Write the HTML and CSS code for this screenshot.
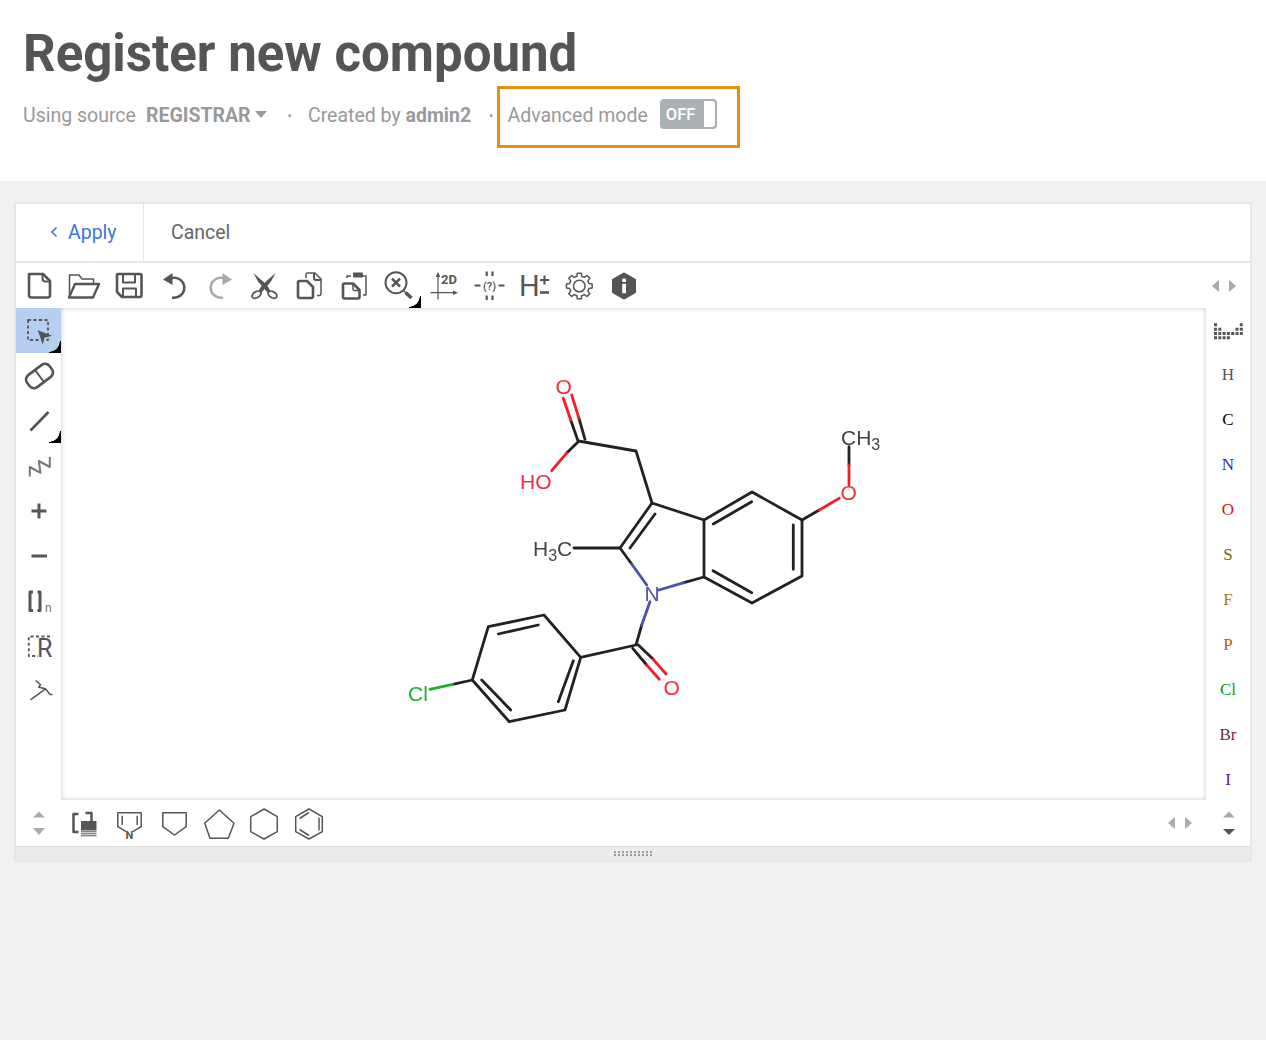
FILE: index.html
```html
<!DOCTYPE html>
<html lang="en">
<head>
<meta charset="utf-8">
<title>Register new compound</title>
<link rel="stylesheet" href="styles.css">
</head>
<body>
<header class="page-head">
  <h1 class="title">Register new compound</h1>
  <div class="meta">
    <span class="meta-source">Using source</span>
    <strong class="meta-registrar">REGISTRAR</strong>
    <span class="caret"></span>
    <span class="dot dot-a">•</span>
    <span>Created by <strong>admin2</strong></span>
    <span class="dot dot-b">•</span>
    <div class="adv-box">
      <span class="adv-label">Advanced mode</span>
      <span class="toggle"><span class="toggle-label">OFF</span><span class="toggle-knob"></span></span>
    </div>
  </div>
</header>
<main class="content">
  <section class="editor">
    <div class="actions">
      <button class="action action-apply"><svg class="chev" width="8" height="12" viewBox="0 0 8 12"><path d="M6.5 1.5 2 6l4.5 4.5"/></svg>Apply</button>
      <button class="action action-cancel">Cancel</button>
    </div>

    <div class="toolbar-top">
      <div class="tools-row">
        <span class="cell"><svg class="ic" viewBox="0 0 32 32"><path class="s26" d="M6 4H20L27 11V25a2.500 2.500 0 0 1-2.500 2.500H8.500A2.500 2.500 0 0 1 6 25Z"/><path class="s2" d="M19.500 4v4.500a3 3 0 0 0 3 3H27"/></svg></span>
        <span class="cell"><svg class="ic" viewBox="0 0 32 32"><path class="s15" d="M1.500 25V5h9.500l3 4h11.500v5"/><path class="s24" d="M1 27.500 7 14h24l-6 13.500Z"/></svg></span>
        <span class="cell"><svg class="ic" viewBox="0 0 32 32"><path class="s26" d="M5 4h22a1.500 1.500 0 0 1 1.500 1.500v20a1.500 1.500 0 0 1-1.500 1.500H9l-5-5V5a1 1 0 0 1 1-1Z"/><path class="s2" d="M10 4v8.500h12V4M10 27v-8.500h13V27"/></svg></span>
        <span class="cell"><svg class="ic" viewBox="0 0 32 32"><path class="s26" d="M12.500 8.500A10 10 0 1 1 14 27.500"/><path class="f" d="M5 9.500 14.500 3V15Z"/></svg></span>
        <span class="cell"><svg class="ic ic-off" viewBox="0 0 32 32"><path class="s26" d="M21.500 8.500A10 10 0 1 0 20 27.500"/><path class="f" d="M29 9.500 19.500 3V15Z"/></svg></span>
        <span class="cell"><svg class="ic" viewBox="0 0 32 32"><polygon class="f" points="5.500,3 19,15 22.500,21 19.500,22.500 10,11.500"/><polygon class="f" points="27.500,3 14,15 10.500,21 13.500,22.500 23,11.500"/><ellipse class="s18" cx="8.500" cy="24.700" rx="4.800" ry="3" transform="rotate(-30 8.500 24.700)"/><ellipse class="s18" cx="24.500" cy="24.700" rx="4.800" ry="3" transform="rotate(30 24.500 24.700)"/></svg></span>
        <span class="cell"><svg class="ic" viewBox="0 0 32 32"><path class="s15" d="M13 8V4.500a1.500 1.500 0 0 1 1.500-1.500H22l6 6v15a1.500 1.500 0 0 1-1.500 1.500H24"/><path class="s2" d="M21 3v5a2 2 0 0 0 2 2h5"/><path class="s26" d="M5 12.500a1.500 1.500 0 0 1 1.500-1.500H14l6 6v9.500a1.500 1.500 0 0 1-1.500 1.500h-12A1.500 1.500 0 0 1 5 26.500Z"/></svg></span>
        <span class="cell"><svg class="ic" viewBox="0 0 32 32"><path class="s15" d="M9 8V6h4M24 6h4v19h-3"/><rect class="f" x="15" y="2.500" width="10" height="5" rx="1"/><path class="s26" d="M5 15a1.500 1.500 0 0 1 1.500-1.500H15l6.500 6.500v7a1.500 1.500 0 0 1-1.500 1.500H6.500A1.500 1.500 0 0 1 5 27Z"/><path class="s15" d="M15 13.500V19a1.500 1.500 0 0 0 1.500 1.500h5"/></svg></span>
        <span class="cell"><svg class="ic" viewBox="0 0 32 32"><circle class="s2" cx="13" cy="12.700" r="10.500"/><path class="s26" d="M9 8.700l8 8M17 8.700l-8 8"/><path class="s15" d="M20.500 20.500l2 2"/><path class="s36" d="M22.500 22.500 28.500 28"/></svg><span class="corner"></span></span>
        <span class="cell"><svg class="ic" viewBox="0 0 32 32"><path class="s12" d="M10 5V29.500M2.500 22.700H27"/><path class="f" d="M10 2 12.300 7H7.700ZM30 22.700 25 20.500V25Z"/><text class="t2d" x="13" y="14">2D</text></svg></span>
        <span class="cell"><svg class="ic" viewBox="0 0 32 32"><path class="s22" d="M13.700 1.500v4.500M19.500 1.500v4.500M13.700 25.500v4.500M19.500 25.500v4.500M1.500 15.500h6M25.500 15.500h6"/><text class="tq" x="16.500" y="19.500">(?)</text></svg></span>
        <span class="cell"><svg class="ic" viewBox="0 0 32 32"><text class="th" x="1" y="26">H</text><path class="s22" d="M22 10h9M26.500 5.500v9"/><path class="s26" d="M22 22.500h9"/></svg></span>
        <span class="cell"><svg class="ic" viewBox="0 0 32 32"><g transform="translate(16.300 16)"><polygon class="s15" points="9.700,-2.420 12.840,-2.030 12.840,2.030 9.700,2.420 8.570,5.150 10.520,7.640 7.640,10.520 5.150,8.570 2.420,9.700 2.030,12.840 -2.030,12.840 -2.420,9.700 -5.150,8.570 -7.640,10.520 -10.520,7.640 -8.570,5.150 -9.700,2.420 -12.840,2.030 -12.840,-2.030 -9.700,-2.420 -8.570,-5.150 -10.520,-7.640 -7.640,-10.520 -5.150,-8.570 -2.420,-9.700 -2.030,-12.840 2.030,-12.840 2.420,-9.700 5.150,-8.570 7.640,-10.520 10.520,-7.640 8.570,-5.150"/><circle class="s15" r="5.800"/></g></svg></span>
        <span class="cell"><svg class="ic" viewBox="0 0 32 32"><polygon class="fs" points="16,4 26.500,10 26.500,22 16,28 5.500,22 5.500,10"/><rect class="w" x="14.200" y="8.500" width="3.800" height="3.600" rx="1"/><rect class="w" x="14.200" y="13.800" width="3.800" height="9.500" rx=".6"/></svg></span>
      </div>
      <div class="nav-lr">
        <svg width="7" height="12" viewBox="0 0 7 12"><path class="tri" d="M7 0V12L0 6Z"/></svg>
        <svg width="7" height="12" viewBox="0 0 7 12"><path class="tri" d="M0 0V12L7 6Z"/></svg>
      </div>
    </div>

    <div class="workspace">
      <div class="toolbar-left">
        <span class="cell cell-active"><svg class="ic" viewBox="0 0 32 32"><path class="s-dash" d="M5 5H25V25H5Z"/><path class="f s-none" d="M14.700 15.300 29.200 20.800 21.500 22.800 19.800 29.700Z"/></svg><span class="corner"></span></span>
        <span class="cell"><svg class="ic" viewBox="0 0 32 32"><g transform="translate(16.500 16) rotate(-37)"><rect class="s26" x="-14" y="-7.500" width="28" height="15" rx="5.500"/><path class="s2" d="M0-7.500V7.500"/></g></svg></span>
        <span class="cell"><svg class="ic" viewBox="0 0 32 32"><path class="s26" d="M7.500 25.500 25.500 7"/></svg><span class="corner"></span></span>
        <span class="cell"><svg class="ic ic-soft" viewBox="0 0 32 32"><path class="s2" d="M6.800 26.500V17L17.500 22.800 15.800 11 26.800 17V7"/></svg></span>
        <span class="cell"><svg class="ic" viewBox="0 0 32 32"><path class="s3" d="M8.500 16H23.500M16 8.500V23.500"/></svg></span>
        <span class="cell"><svg class="ic" viewBox="0 0 32 32"><path class="s3" d="M8.500 16H24"/></svg></span>
        <span class="cell"><svg class="ic" viewBox="0 0 32 32"><path class="s3" d="M10 7H7V25.500H10M14.500 7H17V25.500H14.500"/><text class="tn" x="22" y="26.500">n</text></svg></span>
        <span class="cell"><svg class="ic" viewBox="0 0 32 32"><path class="s-dash" d="M27 6.500H5.800V26H15"/><text class="tr" x="14" y="27">R</text></svg></span>
        <span class="cell"><svg class="ic" viewBox="0 0 32 32"><path class="s15" d="M7.500 24.800 22.500 13.800 27 19.500h2.500M12.500 5.500 17.500 9.500 15.800 12.200 22.500 13.800"/></svg></span>
      </div>

      <div class="canvas">
        <svg class="molecule" viewBox="61 308 1145 492">
          <g class="bond">
            <path d="M570.700 420 578.300 441.700M579 418.300 585 439.300"/>
            <path d="M578.300 441 636 451 652 503"/>
            <path d="M578 442 566.700 453"/>
            <path d="M652 503 620 548M655 514 630 548M652 503 704 520"/>
            <path d="M620 548H574M620 548 631.700 564"/>
            <path d="M684 582.700 704 577"/>
            <path d="M704 520V577M704 520 752 492 802 520V576L752 603 704 577"/>
            <path d="M713.300 524 751.700 501.700M793.300 525V569.300M713 570.700 751.700 592.700"/>
            <path d="M802 520 819.300 510M849 465V446.700"/>
            <path d="M641.700 625 636 645 580.700 657.300 544 615 488.300 626.700 472.300 680 509.300 721.700 565 710 580.700 657.300"/>
            <path d="M538.300 625 498.300 634M573.300 660.700 558.300 701.700M481.700 680 510.700 710"/>
            <path d="M472.300 680 452.700 684.300"/>
            <path d="M632.700 648.300 646.700 665M638.300 645 653.300 659.300"/>
          </g>
          <g class="bond bond-red">
            <path d="M563.300 398.300 570.700 420M571.700 395 579 418.300"/>
            <path d="M566.700 453 551.700 470.700"/>
            <path d="M819.300 510 839.300 498.300M849 485V465"/>
            <path d="M646.700 665 659.300 679.300M653.300 659.300 666 674"/>
          </g>
          <g class="bond bond-blue">
            <path d="M631.700 564 646.700 585M659 590 684 582.700M650 601.700 641.700 625"/>
          </g>
          <path class="bond bond-green" d="M452.700 684.300 430 689.300"/>
          <text class="atom atom-o" x="555.500" y="394">O</text>
          <text class="atom atom-o" x="520" y="488.500">HO</text>
          <text class="atom atom-o" x="840.500" y="500">O</text>
          <text class="atom atom-o" x="663.500" y="695">O</text>
          <text class="atom atom-n" x="644.500" y="600.500">N</text>
          <text class="atom atom-g" x="841" y="444.500">CH<tspan class="sub" dy="5">3</tspan></text>
          <text class="atom atom-g" x="533" y="555.500">H<tspan class="sub" dy="5">3</tspan><tspan dy="-5">C</tspan></text>
          <text class="atom atom-cl" x="408" y="700.500">Cl</text>
        </svg>
      </div>

      <div class="toolbar-right">
        <span class="cell"><svg class="ic" viewBox="0 0 32 32"><path class="pt" d="M2 9.800h3M27.800 9.800h3M2 14.200h7.300M23.500 14.200h7.300M2 18.500H30.800M2 22.800h16"/></svg></span>
        <span class="atom-btn el-h">H</span>
        <span class="atom-btn el-c">C</span>
        <span class="atom-btn el-n">N</span>
        <span class="atom-btn el-o">O</span>
        <span class="atom-btn el-s">S</span>
        <span class="atom-btn el-f">F</span>
        <span class="atom-btn el-p">P</span>
        <span class="atom-btn el-cl">Cl</span>
        <span class="atom-btn el-br">Br</span>
        <span class="atom-btn el-i">I</span>
      </div>
    </div>

    <div class="toolbar-bottom">
      <div class="tools-row">
        <span class="cell"><svg class="ic" viewBox="0 0 32 32"><path class="tri" d="M10 10.500 16 4.500 22 10.500ZM10 21 22 21 16 28Z"/></svg></span>
        <span class="cell"><svg class="ic" viewBox="0 0 32 32"><path class="s25" d="M10.500 7H5.500V25H10.500M17.500 6H23.500V15"/><rect class="f" x="13" y="14" width="15.500" height="9.500"/><path class="s1" d="M13 24.800H28.500M13 26.800H28.500M13 28.800H28.500"/></svg></span>
        <span class="cell"><svg class="ic" viewBox="0 0 32 32"><path class="s15" d="M13.200 24.700 4.800 19.700V5.700H28.200V19.700L19.800 24.700M9.200 8.700V18M24.200 8.700V18"/><text class="tnb" x="16.500" y="32">N</text></svg></span>
        <span class="cell"><svg class="ic" viewBox="0 0 32 32"><polygon class="s15" points="4.800,5.700 28.200,5.700 28.200,19.700 16.500,28 4.800,19.700"/></svg></span>
        <span class="cell"><svg class="ic" viewBox="0 0 32 32"><polygon class="s15" points="16.300,3 31,16.300 25.300,31.300 7,31.300 1.700,16.300"/></svg></span>
        <span class="cell"><svg class="ic" viewBox="0 0 32 32"><polygon class="s15" points="16,2 29.300,9.700 29.300,24.700 16,32 2.700,24.700 2.700,9.700"/></svg></span>
        <span class="cell"><svg class="ic" viewBox="0 0 32 32"><polygon class="s15" points="16,2 29.300,9.700 29.300,24.700 16,32 2.700,24.700 2.700,9.700"/><path class="s15" d="M6.500 11.500 16 5.500M26 10.500V23.500M6.500 22.500 16 28.500"/></svg></span>
      </div>
      <div class="bottom-right">
        <div class="nav-lr nav-lr-bottom">
          <svg width="7" height="12" viewBox="0 0 7 12"><path class="tri" d="M7 0V12L0 6Z"/></svg>
          <svg width="7" height="12" viewBox="0 0 7 12"><path class="tri" d="M0 0V12L7 6Z"/></svg>
        </div>
        <span class="cell cell-last"><svg class="ic" viewBox="0 0 32 32"><path class="tri" d="M11 10.500 17 4.500 23 10.500Z"/><path class="f" d="M11 22H23L17 28Z"/></svg></span>
      </div>
    </div>

    <div class="resizer"><svg class="grip" width="38" height="5" viewBox="0 0 38 5"><path d="M0 1H38M0 4H38"/></svg></div>
  </section>
</main>
</body>
</html>
```

FILE: styles.css
```css
* { box-sizing: border-box; }
html, body { margin: 0; height: 100%; }
body { background: #f1f1f1; font-family: Roboto, "Liberation Sans", sans-serif; color: #555; }

.page-head { background: #fff; height: 181px; padding: 25px 0 0 23px; }
.title { margin: 0; font-size: 51px; line-height: 58px; font-weight: 700; color: #555; }
.meta { display: flex; align-items: center; height: 62px; margin-top: 3px; padding-bottom: 4px; font-size: 19.500px; color: #999; }
.meta strong { font-weight: 700; }
.meta-registrar { margin-left: 10px; }
.caret { width: 0; height: 0; margin: 0 0 2px 4px; border: 6.500px solid transparent; border-top: 7px solid #999; border-bottom: 0; }
.dot { font-size: 13px; }
.dot-a { margin: 0 16px 0 21px; }
.dot-b { margin: 0 0 0 18px; }
.adv-box { flex: none; display: flex; align-items: center; gap: 12px; width: 243px; height: 62px; margin: 0 0 -4px 4px; padding: 0 0 6px 7px; border: 3px solid #e6900f; }
.adv-label { margin-top: 2px; }
.toggle { display: flex; align-items: center; justify-content: space-between; width: 57px; height: 30px; padding: 1px 2px 1px 6px; background: #a9b1b4; border-radius: 4px; }
.toggle-label { color: #fff; font-size: 16.500px; font-weight: 500; }
.toggle-knob { width: 11px; height: 26px; background: #fff; border-radius: 0 3px 3px 0; }

.content { padding: 21px 14px 0; }
.editor { width: 1238px; border: 2px solid #e6e6e6; background: #fff; }
.actions { display: flex; height: 59px; border-bottom: 2px solid #e6e6e6; }
.action { display: flex; align-items: center; border: 0; background: none; padding: 0 0 1px; font: 400 19.500px Roboto, sans-serif; }
.action-apply { width: 128px; padding-left: 34px; gap: 10px; color: #3a77d8; border-right: 1px solid #e6e6e6; }
.action-cancel { padding-left: 27px; color: #666; }
.chev path { fill: none; stroke: #3a77d8; stroke-width: 1.6; }

.cell { position: relative; flex: none; display: flex; align-items: center; justify-content: center; width: 45px; height: 45px; }
.cell-active { background: #b6cff0; }
.ic { display: block; width: 32px; height: 32px; overflow: visible; }
.ic-off { opacity: .5; }
.ic-soft { opacity: .8; }
.corner { position: absolute; right: 0; bottom: 0; width: 12px; height: 12px; background: radial-gradient(circle at 0 0, transparent 10.500px, #000 11px); }

.toolbar-top { display: flex; justify-content: space-between; align-items: center; height: 45px; }
.tools-row { display: flex; }
.nav-lr { display: flex; gap: 10px; margin-right: 14px; }
.workspace { display: flex; height: 492px; }
.toolbar-left { flex: none; width: 45px; }
.canvas { flex: none; width: 1145px; height: 492px; box-shadow: inset 0 0 5px rgba(0, 0, 0, .22); }
.molecule { display: block; width: 100%; height: 100%; filter: blur(.35px); }
.toolbar-right { flex: none; width: 44px; }
.toolbar-right .cell { width: 44px; }
.atom-btn { display: flex; align-items: center; justify-content: center; height: 45px; padding-bottom: 2px; font: 400 17px "Liberation Serif", serif; }
.el-h { color: #555; }
.el-c { color: #000; }
.el-n { color: #30309c; }
.el-o { color: #e01010; }
.el-s { color: #6b6b00; }
.el-f { color: #a87a00; }
.el-p { color: #a86a00; }
.el-cl { color: #0a9a0a; }
.el-br { color: #6e2c2c; }
.el-i { color: #6a0ca8; }

.toolbar-bottom { display: flex; justify-content: space-between; height: 46px; align-items: center; }
.bottom-right { display: flex; align-items: center; }
.nav-lr-bottom { margin-right: 14px; }
.cell-last { width: 44px; }

.resizer { display: flex; align-items: center; justify-content: center; height: 14px; background: #ebebeb; border-top: 1px solid #ddd; }
.grip path { fill: none; stroke: #999; stroke-width: 2; stroke-dasharray: 2 2; }

.s1, .s12, .s15, .s18, .s2, .s22, .s24, .s25, .s26, .s3, .s36, .s-dash, .fs { fill: none; stroke: #555; stroke-linejoin: round; }
.s1 { stroke-width: 1; }
.s12 { stroke-width: 1.200; }
.s15 { stroke-width: 1.500; }
.s18 { stroke-width: 1.800; }
.s2 { stroke-width: 2; }
.s22 { stroke-width: 2.200; }
.s24 { stroke-width: 2.400; }
.s25 { stroke-width: 2.500; }
.s26 { stroke-width: 2.600; }
.s3 { stroke-width: 3; }
.s36 { stroke-width: 3.600; }
.s-dash { stroke-width: 1.800; stroke-dasharray: 3 2.500; }
.f { fill: #555; }
.s-none { stroke: none; }
.fs { fill: #555; stroke-width: 3; }
.w { fill: #fff; }
.tri { fill: #aaa; }
.pt { fill: none; stroke: #555; stroke-width: 3; stroke-dasharray: 3 1.300; }

.t2d { font: 700 13px Roboto, sans-serif; fill: #555; }
.tq { font: 500 11px Roboto, sans-serif; fill: #555; text-anchor: middle; }
.th { font: 400 29px Roboto, sans-serif; fill: #555; }
.tn { font: 400 12px Roboto, sans-serif; fill: #777; }
.tr { font: 400 25px Roboto, sans-serif; fill: #555; }
.tnb { font: 700 11px Roboto, sans-serif; fill: #555; text-anchor: middle; }

.bond { fill: none; stroke: #222; stroke-width: 2.800; stroke-linecap: round; stroke-linejoin: round; }
.bond-red { stroke: #f0202a; }
.bond-blue { stroke: #4a52a8; }
.bond-green { stroke: #20b030; }
.atom { font: 400 21px "Liberation Sans", sans-serif; }
.atom-o { fill: #f0303a; }
.atom-n { fill: #4a52a8; }
.atom-g { fill: #444; }
.atom-cl { fill: #22b030; }
.sub { font-size: 16px; }
```
